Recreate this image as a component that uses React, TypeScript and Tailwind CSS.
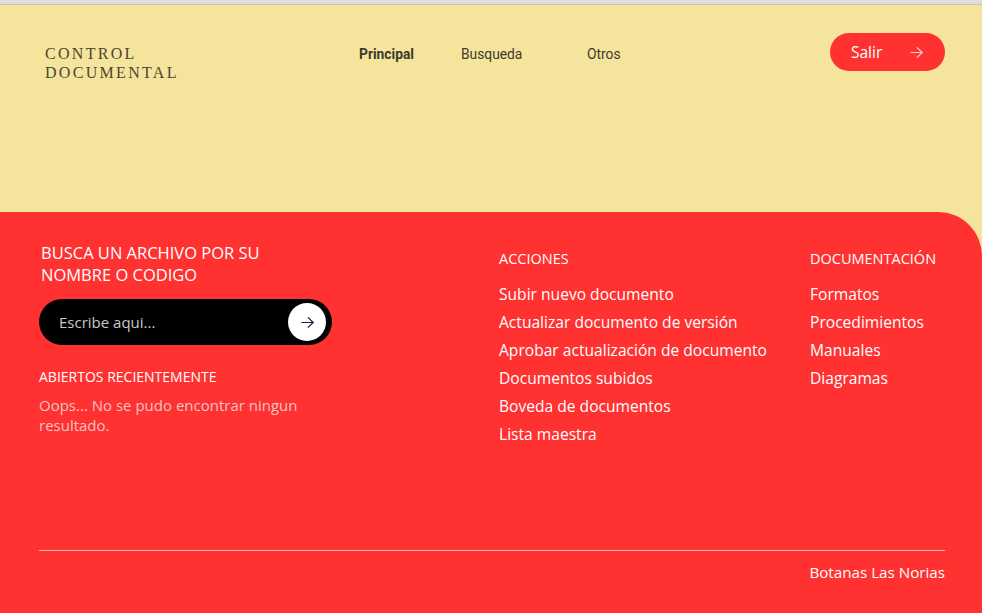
import React from "react";

const poppins = { fontFamily: '"Open Sans", "DejaVu Sans", sans-serif' };

function Arrow({ className = "" }: { className?: string }) {
  return (
    <svg viewBox="0 0 24 24" className={className} fill="none" stroke="currentColor" strokeWidth={1.6} strokeLinecap="round" strokeLinejoin="round">
      <path d="M4 12h16" />
      <path d="M13 5l7 7-7 7" />
    </svg>
  );
}

export default function App() {
  const acciones = [
    "Subir nuevo documento",
    "Actualizar documento de versión",
    "Aprobar actualización de documento",
    "Documentos subidos",
    "Boveda de documentos",
    "Lista maestra",
  ];
  const docs = ["Formatos", "Procedimientos", "Manuales", "Diagramas"];
  return (
    <div className="w-[982px] h-[613px] overflow-hidden bg-[#f5e49c] flex flex-col">
      <div className="h-[5px] bg-[#dedede] border-b border-[#c4c4c4] shrink-0" />
      <header className="h-[207px] shrink-0 flex items-start pl-[45px] pr-[37px] pt-[28px]">
        <div
          className="text-[16px] leading-[19px] tracking-[2.3px] text-[#4b4631] mt-[11px] w-[314px]"
          style={{ fontFamily: '"Liberation Serif", serif' }}
        >
          <div>CONTROL</div>
          <div>DOCUMENTAL</div>
        </div>
        <nav className="flex items-center text-[13.8px] text-[#3d3a2c] mt-[11px]" style={{ fontFamily: "Roboto, sans-serif" }}>
          <span className="font-bold w-[102px]">Principal</span>
          <span className="w-[126px]">Busqueda</span>
          <span>Otros</span>
        </nav>
        <div className="flex-1" />
        <button
          className="w-[115px] h-[38px] rounded-full bg-[#ff3131] text-white flex items-center pl-[21px] pr-[20px] justify-between text-[15.5px]"
          style={poppins}
        >
          <span className="mt-[1px]">Salir</span>
          <Arrow className="w-[17px] h-[17px] text-[#ffd0d0]" />
        </button>
      </header>
      <footer className="flex-1 bg-[#ff3131] rounded-tr-[44px] text-white pl-[39px] pr-[37px] pt-[30px] flex flex-col" style={poppins}>
        <div className="grid grid-cols-[460px_311px_1fr] flex-1">
          <div>
            <div className="text-[16.5px] leading-[22px] pl-[2px] w-[280px]">BUSCA UN ARCHIVO POR SU NOMBRE O CODIGO</div>
            <div className="mt-[13px] w-[293px] h-[46px] bg-black rounded-full flex items-center pl-[20px] pr-[6px] justify-between">
              <span className="text-[15px] text-[#c9c9c9]">Escribe aqui...</span>
              <div className="w-[38px] h-[38px] rounded-full bg-white flex items-center justify-center text-[#1f1d3a]">
                <Arrow className="w-[17px] h-[17px]" />
              </div>
            </div>
            <div className="mt-[22px] text-[14px] leading-[20px]">ABIERTOS RECIENTEMENTE</div>
            <div className="mt-[8px] text-[15px] leading-[20px] text-[#f6c3c3] w-[300px]">
              Oops... No se pudo encontrar ningun resultado.
            </div>
          </div>
          <div className="pt-[8px]">
            <div className="text-[14.5px] leading-[18px]">ACCIONES</div>
            <div className="mt-[16px] flex flex-col gap-[8px]">
              {acciones.map((a) => (
                <div key={a} className="text-[15.6px] leading-[20px] whitespace-nowrap">{a}</div>
              ))}
            </div>
          </div>
          <div className="pt-[8px]">
            <div className="text-[14.5px] leading-[18px]">DOCUMENTACIÓN</div>
            <div className="mt-[16px] flex flex-col gap-[8px]">
              {docs.map((a) => (
                <div key={a} className="text-[15.6px] leading-[20px]">{a}</div>
              ))}
            </div>
          </div>
        </div>
        <div className="border-t border-[#f8b3b3]" />
        <div className="flex justify-end pt-[11px] pb-[31px] text-[15.2px] leading-[20px]">Botanas Las Norias</div>
      </footer>
    </div>
  );
}
